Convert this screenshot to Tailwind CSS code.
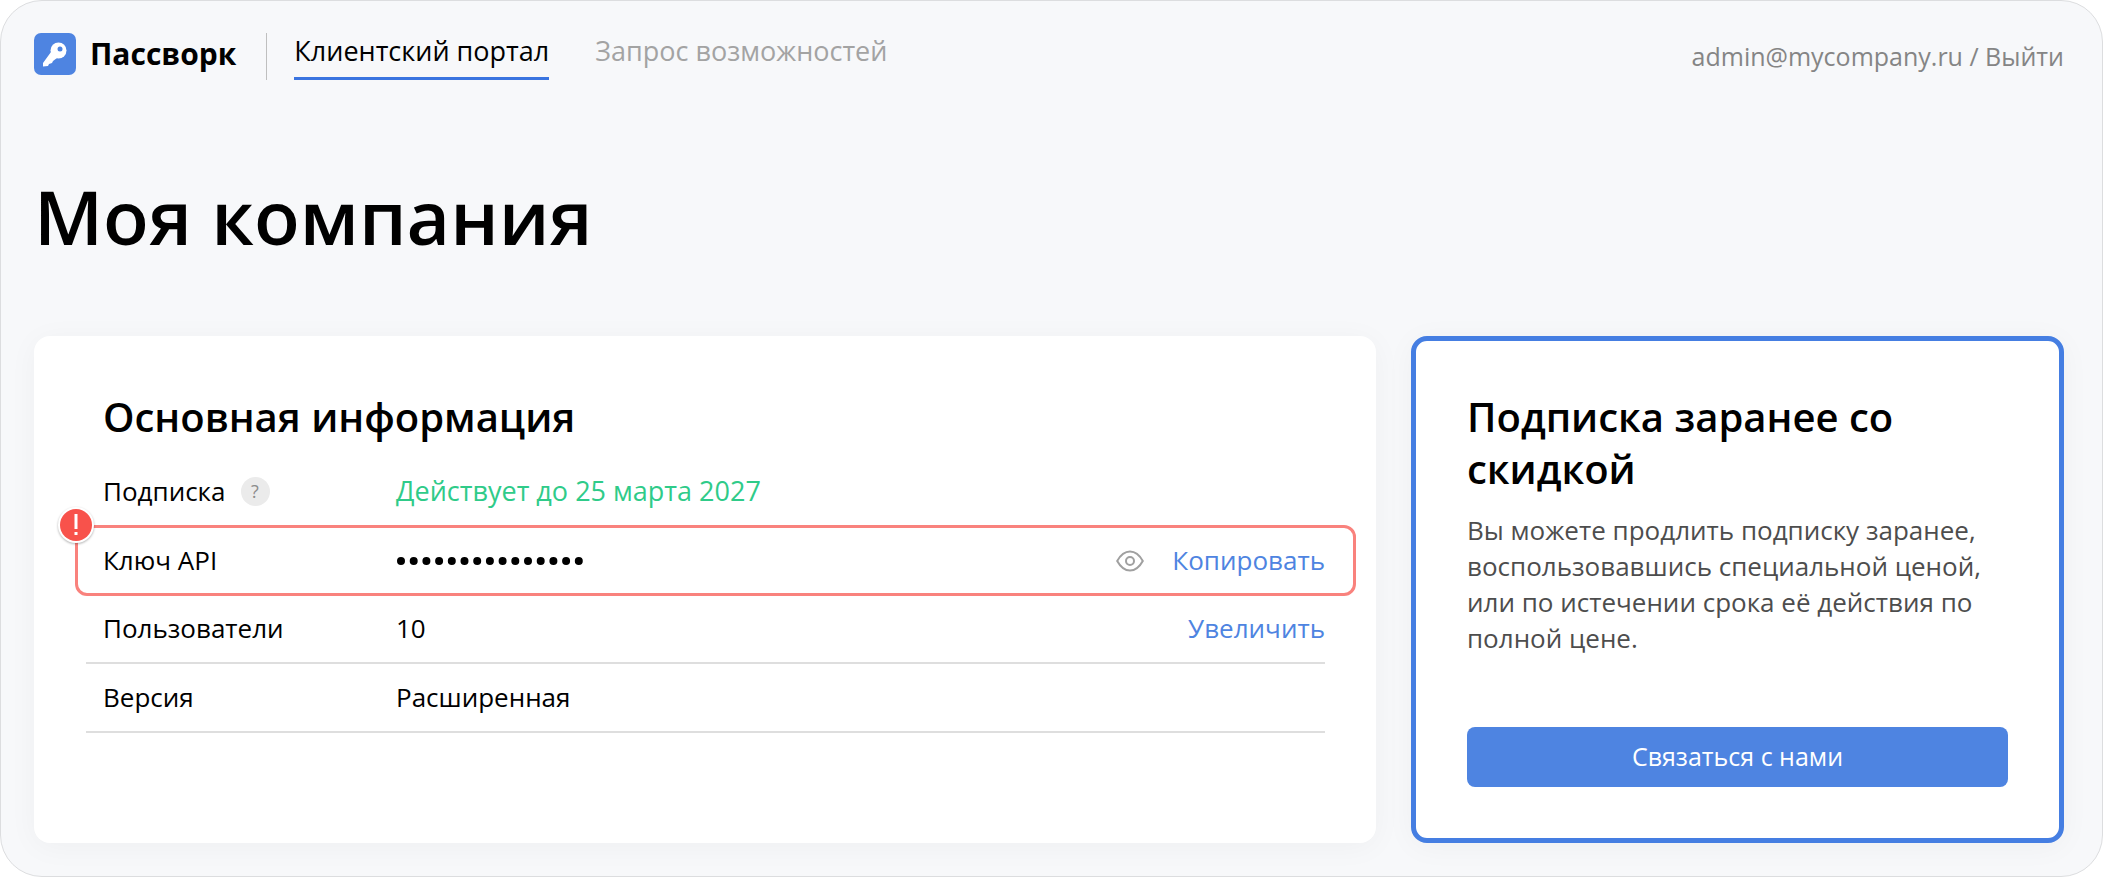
<!DOCTYPE html>
<html lang="ru">
  <head>
    <meta charset="UTF-8" />
    <meta name="viewport" content="width=device-width, initial-scale=1.0" />
    <title>Пассворк — Клиентский портал</title>
    <script src="https://cdn.jsdelivr.net/npm/@tailwindcss/browser@4"></script>
  </head>
  <body class="bg-white font-['Open_Sans','Noto_Sans',sans-serif] text-[26px] text-black">
    <div class="min-h-screen rounded-[42px] border border-[#dcdddf] bg-[#f7f8fa] pr-[38px] pl-[33px]">
      <header class="flex items-start pt-8">
        <a href="#" class="flex items-center gap-[14px]">
          <svg class="size-[42px]" viewBox="0 0 42 42">
            <rect width="42" height="42" rx="7" fill="#4e84e1" />
            <circle cx="24.500" cy="17.500" r="8" fill="#fff" />
            <path d="M17 19l6 6-4 3-1 2-3 1-1 2-5 .5V30z" fill="#fff" />
            <circle cx="26" cy="16" r="2.500" fill="#4e84e1" />
          </svg>
          <span class="text-[30px] leading-[42px] font-bold">Пассворк</span>
        </a>
        <div class="ml-[30px] h-[47px] w-px bg-[#bfbfbf]"></div>
        <nav class="ml-[27px] flex gap-[46px] text-[27px]">
          <a href="#" class="border-b-3 border-[#3a74e0] pb-2 leading-[36px]">Клиентский портал</a>
          <a href="#" class="leading-[36px] text-[#a3a3a3]">Запрос возможностей</a>
        </nav>
        <div class="ml-auto pt-[5px] text-[25px] leading-[36px] text-[#858585]">
          <span>admin@mycompany.ru</span> / <a href="#">Выйти</a>
        </div>
      </header>

      <h1 class="mt-[84px] text-[75px] leading-[104px] font-semibold">Моя компания</h1>

      <main class="mt-[68px] mb-8 grid grid-cols-[1342fr_653fr] gap-[35px]">
        <section class="rounded-2xl bg-white pt-[55px] pr-[51px] pb-[110px] pl-[52px] shadow-[0_4px_30px_rgba(0,0,0,0.04)]">
          <h2 class="pl-[17px] text-[40px] leading-[52px] font-semibold">Основная информация</h2>
          <table class="mt-[14px] w-full border-separate border-spacing-0">
            <tr class="h-[69px]">
              <th class="w-[310px] pl-[17px] text-left font-normal">
                <span class="flex items-center gap-[15px]">
                  Подписка
                  <button type="button" class="size-[29px] rounded-full bg-[#ebebeb] text-[18px] leading-[29px] text-[#8c8c8c]" aria-label="Справка о подписке">?</button>
                </span>
              </th>
              <td class="text-[27px] text-[#2fcb89]">Действует до 25 марта 2027</td>
              <td></td>
            </tr>
            <tr class="relative h-[69px]">
              <th class="pl-[17px] text-left font-normal">
                Ключ API
                <!-- attention frame -->
                <span class="pointer-events-none absolute -top-px -right-[31px] -bottom-px -left-[11px] rounded-xl border-3 border-[#f9827d]"></span>
                <svg class="absolute -top-[21px] -left-[30px] size-[40px] drop-shadow-[0_1px_1px_rgba(0,0,0,0.3)]" viewBox="0 0 40 40">
                  <circle cx="20" cy="20" r="18" fill="#fff" />
                  <circle cx="20" cy="20" r="16" fill="#f8524b" />
                  <path d="M18.500 9h3v15h-3zM18.500 27h3v3h-3z" fill="#fff" />
                </svg>
              </th>
              <td>
                <svg class="h-[10px] w-[189px]" viewBox="0 0 189 10" role="img" aria-label="Ключ скрыт">
                  <path d="M5 5H186" fill="none" stroke="#000" stroke-width="8" stroke-linecap="round" stroke-dasharray="0 12.700" />
                </svg>
              </td>
              <td>
                <div class="flex items-center justify-end gap-[28px]">
                  <button type="button" aria-label="Показать ключ">
                    <svg class="h-[22px] w-[28px]" viewBox="0 0 28 22" fill="none" stroke="#a0a0a0" stroke-width="2">
                      <path d="M1.200 11C4.500 5 9 1.500 14 1.500S23.500 5 26.800 11C23.500 17 19 20.500 14 20.500S4.500 17 1.200 11z" />
                      <circle cx="14" cy="11" r="4" />
                    </svg>
                  </button>
                  <button type="button" class="text-[#4e84e1]">Копировать</button>
                </div>
              </td>
            </tr>
            <tr class="h-[69px]">
              <th class="border-b-2 border-[#dedede] pl-[17px] text-left font-normal">Пользователи</th>
              <td class="border-b-2 border-[#dedede]">10</td>
              <td class="border-b-2 border-[#dedede] text-right"><a href="#" class="text-[#4e84e1]">Увеличить</a></td>
            </tr>
            <tr class="h-[69px]">
              <th class="border-b-2 border-[#dedede] pl-[17px] text-left font-normal">Версия</th>
              <td class="border-b-2 border-[#dedede]">Расширенная</td>
              <td class="border-b-2 border-[#dedede]"></td>
            </tr>
          </table>
        </section>

        <section class="flex flex-col rounded-2xl border-5 border-[#457ee2] bg-white px-[51px] pt-[50px] pb-[51px] shadow-[0_4px_30px_rgba(0,0,0,0.04)]">
          <h2 class="text-[40px] leading-[52px] font-semibold">Подписка заранее со скидкой</h2>
          <p class="mt-[17px] leading-[36px] text-[#4d4d4d]">
            Вы можете продлить подписку заранее, воспользовавшись специальной ценой, или по истечении срока её действия по полной цене.
          </p>
          <button type="button" class="mt-auto h-[60px] w-full rounded-lg bg-[#4e84e1] text-[25px] text-white">Связаться с нами</button>
        </section>
      </main>
    </div>
  </body>
</html>
